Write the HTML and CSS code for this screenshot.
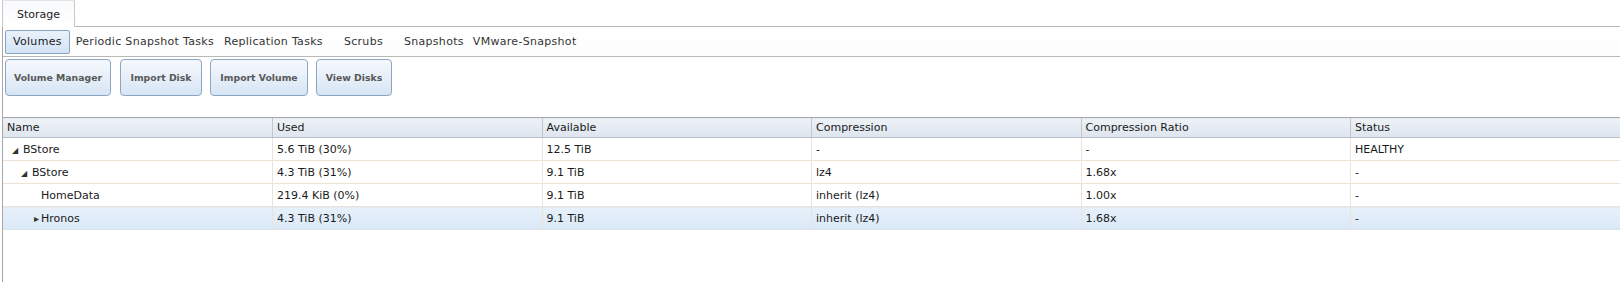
FILE: index.html
```html
<!DOCTYPE html>
<html>
	<head>
		<title>Storage</title>
<link rel="stylesheet" href="styles.css">
	</head>
	<body>
		<div class="tabs">
			<div class="tab">Storage</div>
			<div class="tab-fill"></div>
		</div>
		<div class="pane">
			<div class="subnav">
				<span class="sub active">Volumes</span>
				<span class="sub s1">Periodic Snapshot Tasks</span>
				<span class="sub s2">Replication Tasks</span>
				<span class="sub s3">Scrubs</span>
				<span class="sub s3">Snapshots</span>
				<span class="sub s4">VMware-Snapshot</span>
			</div>
			<div class="actions">
				<button class="btn b1">Volume Manager</button>
				<button class="btn b2">Import Disk</button>
				<button class="btn b3">Import Volume</button>
				<button class="btn b4">View Disks</button>
			</div>
			<table class="grid">
				<thead>
					<tr>
						<th>Name</th>
						<th>Used</th>
						<th>Available</th>
						<th>Compression</th>
						<th>Compression Ratio</th>
						<th>Status</th>
					</tr>
				</thead>
				<tbody>
					<tr>
						<td><span class="name lvl0"><span class="exp">&#9698;</span>BStore</span></td>
						<td>5.6 TiB (30%)</td>
						<td>12.5 TiB</td>
						<td>-</td>
						<td>-</td>
						<td>HEALTHY</td>
					</tr>
					<tr>
						<td><span class="name lvl1"><span class="exp">&#9698;</span>BStore</span></td>
						<td>4.3 TiB (31%)</td>
						<td>9.1 TiB</td>
						<td>lz4</td>
						<td>1.68x</td>
						<td>-</td>
					</tr>
					<tr>
						<td><span class="name lvl2">HomeData</span></td>
						<td>219.4 KiB (0%)</td>
						<td>9.1 TiB</td>
						<td>inherit (lz4)</td>
						<td>1.00x</td>
						<td>-</td>
					</tr>
					<tr class="selected">
						<td><span class="name lvl2"><span class="col">&#9656;</span>Hronos</span></td>
						<td>4.3 TiB (31%)</td>
						<td>9.1 TiB</td>
						<td>inherit (lz4)</td>
						<td>1.68x</td>
						<td>-</td>
					</tr>
				</tbody>
			</table>
		</div>
	</body>
</html>
```
FILE: styles.css
```css
body {
	margin: 0;
	font-family: "DejaVu Sans", Verdana, sans-serif;
	font-size: 11px;
	color: #1a1a1a;
	background: #fff;
	height: 282px;
	overflow: hidden;
}

.tabs {
	display: flex;
	height: 27px;
	padding-left: 2px;
}
.tab {
	width: 71px;
	border: 1px solid #c8c8c8;
	border-top-color: #e4e4e4;
	border-bottom: none;
	text-align: center;
	line-height: 28px;
	font-size: 11px;
	color: #222;
	background: linear-gradient(#f7f9fb, #fff);
}
.tab-fill {
	flex-grow: 1;
	border-bottom: 1px solid #b8b8b8;
}

.pane {
	margin-left: 2px;
	border-left: 1px solid #a8a8a8;
	height: 260px;
}

.subnav {
	display: flex;
	align-items: center;
	height: 29px;
	padding-left: 2px;
	border-bottom: 1px solid #b8b8b8;
	background: linear-gradient(#fff, #fcfdfc);
}
.sub {
	color: #333;
	letter-spacing: 0.3px;
}
.s1 { margin-left: 6px; }
.s2 { margin-left: 10px; }
.s3 { margin-left: 21px; }
.s4 { margin-left: 9px; }
.sub.active {
	padding: 4px 7px 5px 7px;
	border: 1px solid #8aa4c0;
	border-radius: 2px;
	background: linear-gradient(#eaf2fb, #d3e3f4);
	color: #1a1a1a;
}

.actions {
	display: flex;
	gap: 8px;
	padding: 2px 0 0 2px;
	height: 60px;
	box-sizing: border-box;
}
.btn {
	height: 37px;
	font-family: "DejaVu Sans", Verdana, sans-serif;
	font-size: 9.3px;
	font-weight: bold;
	color: #585858;
	border: 1px solid #8ba6c2;
	border-radius: 4px;
	background: linear-gradient(#f6f9fd, #d7e5f4);
	padding: 0;
}
.b1 { width: 106px; }
.b2 { width: 82px; margin-left: 1px; }
.b3 { width: 98px; }
.b4 { width: 76px; }

.grid {
	width: 1617px;
	border-collapse: collapse;
	table-layout: fixed;
}
.grid th {
	text-align: left;
	font-weight: normal;
	height: 19px;
	padding: 0 4px;
	background: linear-gradient(#eef2f7, #dde5ee);
	border-top: 1px solid #a9a9a9;
	border-bottom: 1px solid #b9bec4;
	border-left: 1px solid #c4c8cc;
	color: #1a1a1a;
}
.grid th:first-child { border-left: none; }
.grid td {
	height: 22px;
	padding: 0 4px;
	border-bottom: 1px solid #ede2d8;
	border-left: 1px solid #ede2d8;
	white-space: nowrap;
}
.grid td:first-child { border-left: none; }
.grid tr.selected td {
	background: linear-gradient(#e6f0fa, #dbe9f7);
	border-bottom-color: #d9e2ea;
}

.name { display: inline-block; }
.lvl0 { padding-left: 5px; }
.lvl1 { padding-left: 14px; }
.lvl2 { padding-left: 34px; }
.exp {
	display: inline-block;
	width: 11px;
	font-size: 8px;
	color: #333;
}
.col {
	display: inline-block;
	width: 7px;
	margin-left: -7px;
	font-size: 10px;
	color: #333;
}
```
